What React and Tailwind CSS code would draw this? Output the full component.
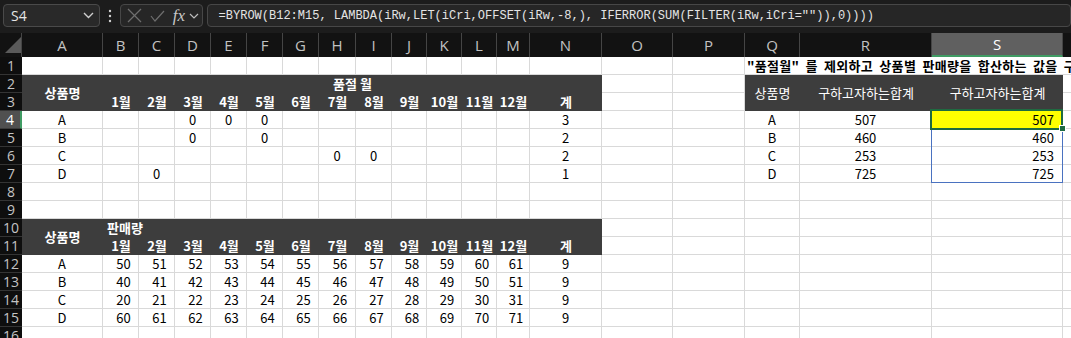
import React from "react";

const CELL =
  "border-r border-b border-[#d9d9d9] bg-white text-black flex items-center overflow-hidden whitespace-nowrap";
const BAND =
  "bg-[#3d3d3d] text-white flex items-center overflow-hidden whitespace-nowrap";

function W({ c = "", children }) {
  return <div className={`${CELL} ${c}`}>{children}</div>;
}
function D({ c = "", children }) {
  return <div className={`${BAND} ${c}`}>{children}</div>;
}
function RH({ n, sel }) {
  return sel ? (
    <div className="bg-[#505050] text-white border-b border-b-[#3a3a3a] border-r-2 border-r-[#3f9b63] flex items-center justify-center text-[14px] font-['Open_Sans',sans-serif] leading-none">
      {n}
    </div>
  ) : (
    <div className="bg-[#0e0e0e] text-[#c4c4c4] border-b border-[#343434] flex items-center justify-center text-[14px] font-['Open_Sans',sans-serif] leading-none">
      {n}
    </div>
  );
}

const LETTERS = "ABCDEFGHIJKLMNOPQRS".split("");
const MONTHS = ["1월", "2월", "3월", "4월", "5월", "6월", "7월", "8월", "9월", "10월", "11월", "12월"];
const T1 = [
  { n: "A", z: [3, 4, 5] },
  { n: "B", z: [3, 5] },
  { n: "C", z: [7, 8] },
  { n: "D", z: [2] },
];
const T2 = [
  { n: "A", b: 50 },
  { n: "B", b: 40 },
  { n: "C", b: 20 },
  { n: "D", b: 60 },
];
const RES = [507, 460, 253, 725];

function ColHeader() {
  return (
    <>
      <div className="bg-[#121212] border-r border-[#454545] relative">
        <svg className="absolute left-[5px] top-[4px]" width="16" height="16" viewBox="0 0 16 16">
          <polygon points="0,16 16,16 16,0" fill="#5a5a5a" />
        </svg>
      </div>
      {LETTERS.map((l) =>
        l === "S" ? (
          <div
            key={l}
            className="bg-[#606060] text-white border-b-2 border-b-[#3f9b63] border-r border-r-[#454545] flex items-center justify-center text-[15px] font-['Open_Sans',sans-serif]"
          >
            {l}
          </div>
        ) : (
          <div
            key={l}
            className="bg-[#121212] text-[#c2c2c2] border-r border-[#454545] flex items-center justify-center text-[15px] font-['Open_Sans',sans-serif]"
          >
            {l}
          </div>
        )
      )}
      <div className="bg-[#121212]" />
    </>
  );
}

function Empty({ count }) {
  return (
    <>
      {Array.from({ length: count }).map((_, i) => (
        <W key={i} />
      ))}
    </>
  );
}

export default function App() {
  return (
    <div className="w-[1071px] h-[338px] overflow-hidden bg-[#1c1c1c] font-['Noto_Sans_CJK_KR',sans-serif]">
      {/* formula bar */}
      <div className="h-[33px] flex items-start pt-[4px] pl-[3px]">
        <div className="w-[100px] h-[23px] rounded-[4px] border border-[#4a4a4a] bg-[#292929] flex items-center justify-between pl-[7px] pr-[5px]">
          <span className="text-[14px] text-[#e6e6e6] font-['Open_Sans',sans-serif] leading-none">S4</span>
          <svg width="11" height="7" viewBox="0 0 11 7">
            <polyline points="1,1 5.5,5.5 10,1" fill="none" stroke="#cfcfcf" strokeWidth="1.4" />
          </svg>
        </div>
        <div className="w-[21px] h-[23px] flex items-center justify-center">
          <svg width="4" height="14" viewBox="0 0 4 14">
            <circle cx="2" cy="2" r="1.2" fill="#d0d0d0" />
            <circle cx="2" cy="7" r="1.2" fill="#d0d0d0" />
            <circle cx="2" cy="12" r="1.2" fill="#d0d0d0" />
          </svg>
        </div>
        <div className="w-[86px] h-[23px] rounded-[4px] border border-[#474747] bg-[#262626] flex items-center pl-[6px]">
          <svg width="15" height="15" viewBox="0 0 15 15">
            <line x1="1" y1="1" x2="14" y2="14" stroke="#6e6e6e" strokeWidth="1.2" />
            <line x1="14" y1="1" x2="1" y2="14" stroke="#6e6e6e" strokeWidth="1.2" />
          </svg>
          <svg className="ml-[8px]" width="15" height="12" viewBox="0 0 15 12">
            <polyline points="1,6 5,11 14,1" fill="none" stroke="#6e6e6e" strokeWidth="1.2" />
          </svg>
          <span className="ml-[8px] text-[17px] italic text-[#c8c8c8] font-['Liberation_Serif',serif] leading-none">
            fx
          </span>
          <svg className="ml-[4px]" width="10" height="6" viewBox="0 0 10 6">
            <polyline points="1,1 5,5 9,1" fill="none" stroke="#bdbdbd" strokeWidth="1.2" />
          </svg>
        </div>
        <div className="ml-[4px] w-[900px] h-[23px] rounded-[4px] border border-[#474747] bg-[#262626] flex items-center pl-[11px]">
          <span className="text-[12px] text-[#e4e4e4] font-['Liberation_Mono',monospace] whitespace-pre leading-none">
            {'=BYROW(B12:M15, LAMBDA(iRw,LET(iCri,OFFSET(iRw,-8,), IFERROR(SUM(FILTER(iRw,iCri="")),0))))'}
          </span>
        </div>
      </div>

      {/* sheet */}
      <div className="grid grid-cols-[22px_81px_36px_36px_36px_36px_36px_36px_37px_36px_35px_35px_35px_33px_72px_71px_72px_55px_132px_131px_60px] grid-rows-[24px_repeat(16,18px)] text-[13px]">
        <ColHeader />

        {/* row 1 */}
        <RH n="1" />
        <Empty count={16} />
        <div className="col-span-4 bg-white border-b border-[#d9d9d9] flex items-center overflow-hidden whitespace-nowrap pl-[2px] font-bold text-black tracking-[0.3px] [word-spacing:3px]">
          "품절월" 를 제외하고 상품별 판매량을 합산하는 값을 구하기
        </div>

        {/* row 2 */}
        <RH n="2" />
        <D c="row-span-2 justify-center font-bold">상품명</D>
        <D c="col-span-13 justify-center font-bold">품절 월</D>
        <W />
        <W />
        <D c="row-span-2 justify-center">상품명</D>
        <D c="row-span-2 justify-center">구하고자하는합계</D>
        <D c="row-span-2 justify-center">구하고자하는합계</D>
        <W />

        {/* row 3 */}
        <RH n="3" />
        {MONTHS.map((m) => (
          <D key={m} c="justify-center font-bold">
            {m}
          </D>
        ))}
        <D c="justify-center font-bold">계</D>
        <W />
        <W />
        <W />

        {/* rows 4-7 */}
        {T1.map((r, i) => (
          <React.Fragment key={r.n}>
            <RH n={String(4 + i)} sel={i === 0} />
            <W c="justify-center">{r.n}</W>
            {MONTHS.map((m, k) => (
              <W key={m} c="justify-center">
                {r.z.includes(k + 1) ? "0" : ""}
              </W>
            ))}
            <W c="justify-center">{r.z.length}</W>
            <W />
            <W />
            <W c="justify-center">{r.n}</W>
            <W c="justify-center">{RES[i]}</W>
            {i === 0 ? (
              <div className="relative bg-[#ffff00] border-r border-b border-[#d9d9d9] flex items-center justify-end pr-[8px] text-black">
                {RES[i]}
                <div className="absolute -top-px -left-px w-[132px] h-[73px] border border-[#4a72c0] z-10 pointer-events-none" />
                <div className="absolute -top-[2px] -left-[2px] w-[133px] h-[21px] border-2 border-[#1e6b41] z-20 pointer-events-none" />
                <div className="absolute left-[127px] top-[14px] w-[7px] h-[7px] bg-[#1e6b41] border border-white z-30" />
              </div>
            ) : (
              <W c="justify-end pr-[8px]">{RES[i]}</W>
            )}
            <W />
          </React.Fragment>
        ))}

        {/* rows 8-9 */}
        <RH n="8" />
        <Empty count={20} />
        <RH n="9" />
        <Empty count={20} />

        {/* row 10 */}
        <RH n="10" />
        <D c="row-span-2 justify-center font-bold">상품명</D>
        <D c="col-span-13 justify-start pl-[4px] font-bold">판매량</D>
        <Empty count={6} />

        {/* row 11 */}
        <RH n="11" />
        {MONTHS.map((m) => (
          <D key={m} c="justify-center font-bold">
            {m}
          </D>
        ))}
        <D c="justify-center font-bold">계</D>
        <Empty count={6} />

        {/* rows 12-15 */}
        {T2.map((r, i) => (
          <React.Fragment key={r.n}>
            <RH n={String(12 + i)} />
            <W c="justify-center">{r.n}</W>
            {MONTHS.map((m, k) => (
              <W key={m} c="justify-center pl-[6px]">
                {r.b + k}
              </W>
            ))}
            <W c="justify-center">9</W>
            <Empty count={6} />
          </React.Fragment>
        ))}

        {/* row 16 */}
        <RH n="16" />
        <Empty count={20} />
      </div>
    </div>
  );
}
